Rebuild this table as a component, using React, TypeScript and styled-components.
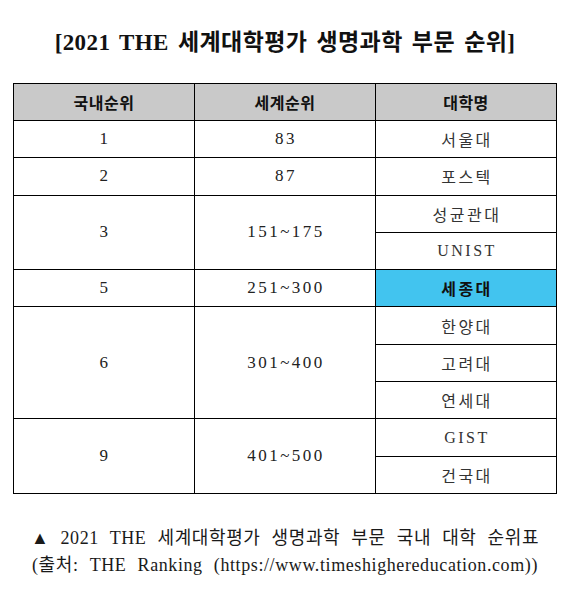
import React from "react";
import styled, {createGlobalStyle} from "styled-components";

const GlobalStyle = createGlobalStyle`
  html, body {
    margin: 0;
    padding: 0;
    background: #ffffff;
  }
  body {
    font-family: "Liberation Serif", "Noto Sans CJK KR", serif;
    color: #111111;
  }
`

type Row = {
    domestic: string;
    world: string;
    names: string[];
    highlight?: boolean;
};

const rows: Row[] = [
    {domestic: "1", world: "83", names: ["서울대"]},
    {domestic: "2", world: "87", names: ["포스텍"]},
    {domestic: "3", world: "151~175", names: ["성균관대", "UNIST"]},
    {domestic: "5", world: "251~300", names: ["세종대"], highlight: true},
    {domestic: "6", world: "301~400", names: ["한양대", "고려대", "연세대"]},
    {domestic: "9", world: "401~500", names: ["GIST", "건국대"]},
];

const App = () => {
    return (
        <>
            <GlobalStyle/>
            <Page>
                <Title>[2021 THE 세계대학평가 생명과학 부문 순위]</Title>
                <Table>
                    <colgroup>
                        <col style={{width: "181px"}}/>
                        <col style={{width: "181px"}}/>
                        <col style={{width: "181px"}}/>
                    </colgroup>
                    <thead>
                    <tr>
                        <HeadCell>국내순위</HeadCell>
                        <HeadCell>세계순위</HeadCell>
                        <HeadCell>대학명</HeadCell>
                    </tr>
                    </thead>
                    <tbody>
                    {rows.map((row) =>
                        row.names.map((name, i) => (
                            <tr key={row.domestic + name}>
                                {i === 0 && (
                                    <>
                                        <Cell rowSpan={row.names.length}>{row.domestic}</Cell>
                                        <Cell rowSpan={row.names.length}>{row.world}</Cell>
                                    </>
                                )}
                                <NameCell highlight={row.highlight}>{name}</NameCell>
                            </tr>
                        ))
                    )}
                    </tbody>
                </Table>
                <Caption>
                    <CaptionLine>▲ 2021 THE 세계대학평가 생명과학 부문 국내 대학 순위표</CaptionLine>
                    <CaptionLine>(출처: THE Ranking (https://www.timeshighereducation.com))</CaptionLine>
                </Caption>
            </Page>
        </>
    )
}

export default App;

const Page = styled.div`
  width: 570px;
  height: 595px;
  display: flex;
  flex-direction: column;
  align-items: center;
  box-sizing: border-box;
  padding-top: 28px;
`
const Title = styled.div`
  font-size: 23px;
  font-weight: 600;
  letter-spacing: 0.4px;
  word-spacing: 3px;
  line-height: 30px;
  height: 30px;
`
const Table = styled.table`
  margin-top: 25px;
  width: 543px;
  border-collapse: collapse;
  table-layout: fixed;
  border: 1.5px solid #000000;
`
const Cell = styled.td`
  border: 1.5px solid #000000;
  height: 36.3px;
  padding: 0 0 0 2px;
  text-align: center;
  vertical-align: middle;
  font-size: 17px;
  letter-spacing: 2.5px;
  color: #222222;
`
const HeadCell = styled.th`
  border: 1.5px solid #000000;
  height: 36px;
  padding: 0;
  background: #c9c9c9;
  text-align: center;
  font-size: 16px;
  font-weight: 700;
  letter-spacing: 0.5px;
  color: #111111;
`
const NameCell = styled(Cell)<{highlight?: boolean}>`
  background: ${props => props.highlight ? "#42c4ef" : "transparent"};
  font-size: 16px;
  font-weight: ${props => props.highlight ? 700 : 400};
  letter-spacing: 2.5px;
  color: ${props => props.highlight ? "#111111" : "#333333"};
`
const Caption = styled.div`
  margin-top: 32px;
  display: flex;
  flex-direction: column;
  align-items: center;
  gap: 3px;
`
const CaptionLine = styled.div`
  font-size: 18px;
  line-height: 24px;
  letter-spacing: 0.6px;
  word-spacing: 6px;
  color: #1a1a1a;
`
